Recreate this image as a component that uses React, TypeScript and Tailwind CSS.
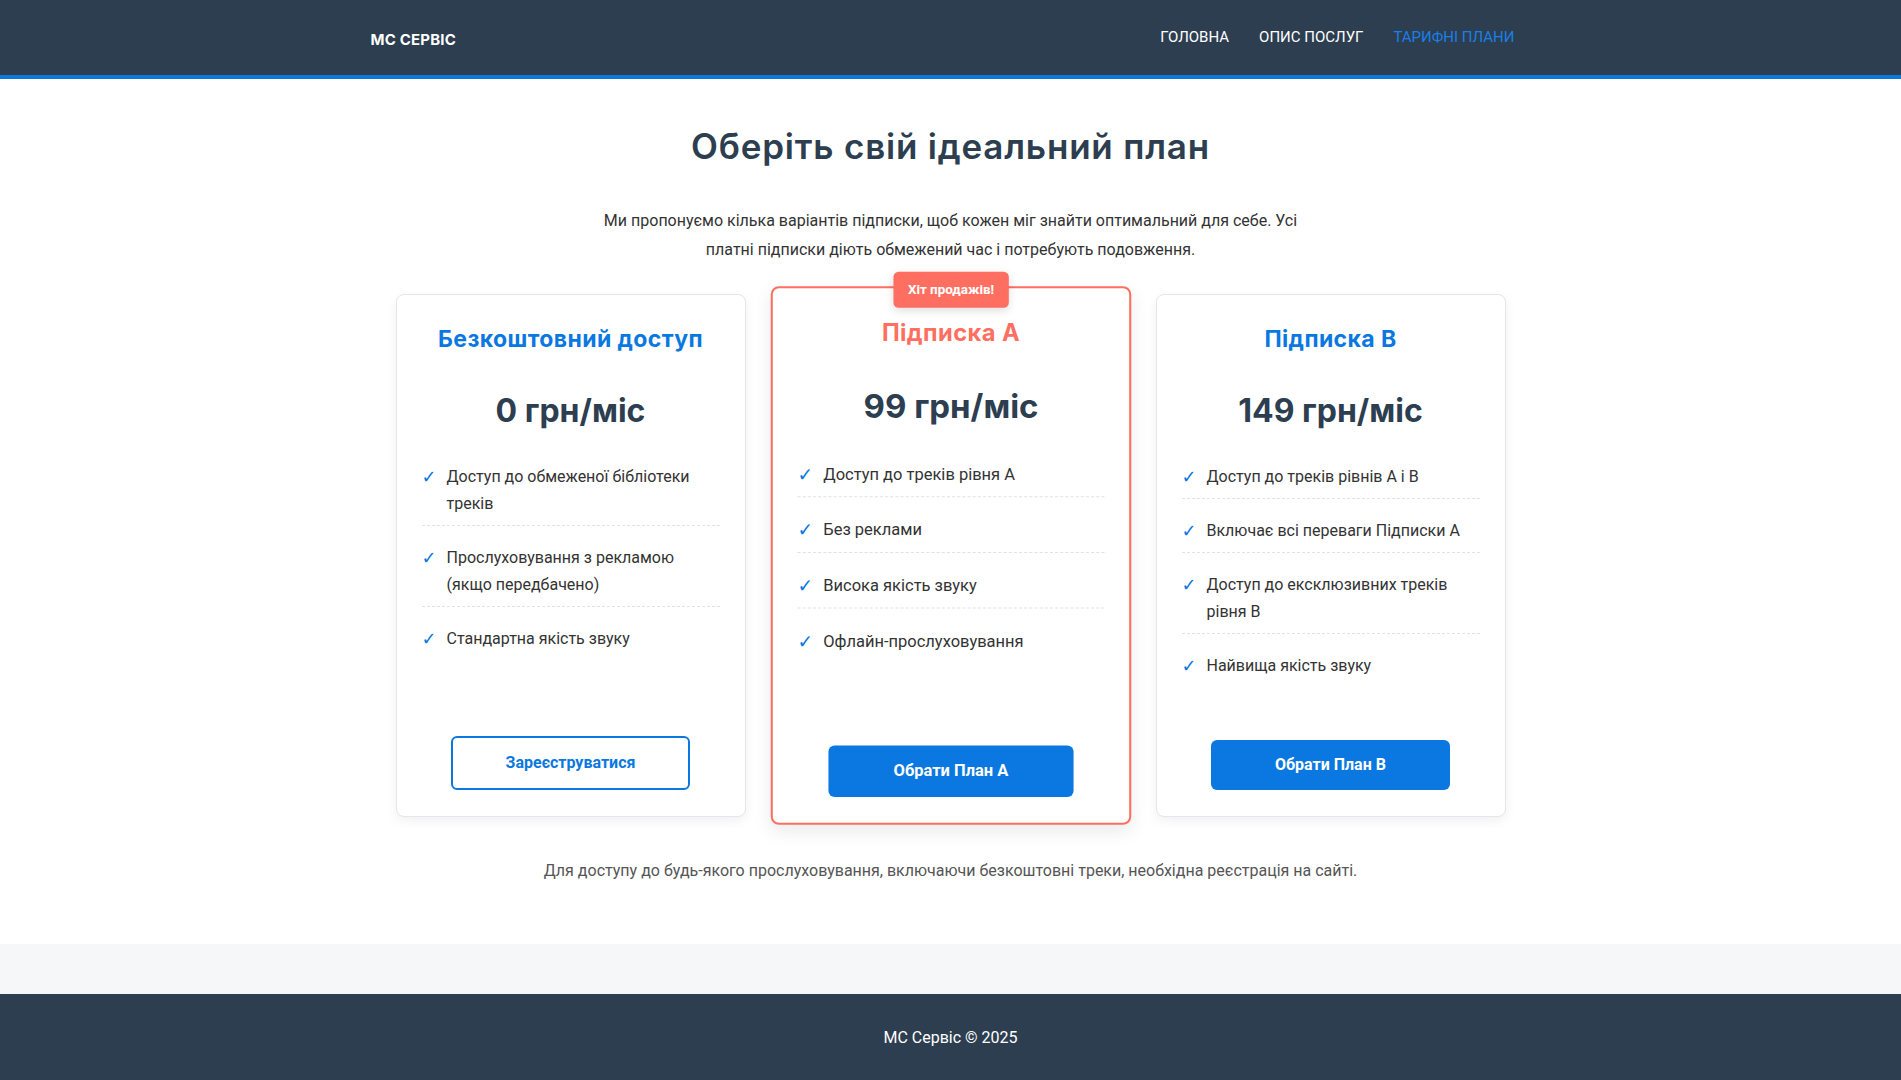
const plans = [
  {
    title: "Безкоштовний доступ",
    price: "0 грн/міс",
    features: ["Доступ до обмеженої бібліотеки треків", "Прослуховування з рекламою (якщо передбачено)", "Стандартна якість звуку"],
    button: "Зареєструватися",
    outline: true,
    featured: false,
  },
  {
    title: "Підписка А",
    price: "99 грн/міс",
    features: ["Доступ до треків рівня А", "Без реклами", "Висока якість звуку", "Офлайн-прослуховування"],
    button: "Обрати План А",
    outline: false,
    featured: true,
  },
  {
    title: "Підписка В",
    price: "149 грн/міс",
    features: ["Доступ до треків рівнів А і В", "Включає всі переваги Підписки А", "Доступ до ексклюзивних треків рівня В", "Найвища якість звуку"],
    button: "Обрати План В",
    outline: false,
    featured: false,
  },
]

function PlanCard({ plan }: { plan: (typeof plans)[number] }) {
  return (
    <div
      className={
        plan.featured
          ? "relative z-10 flex w-[350px] scale-[1.03] flex-col rounded-[8px] border-2 border-[#ff6f61] bg-white px-[24px] pt-[25px] pb-[25px] shadow-[0_6px_18px_rgba(0,0,0,0.08)]"
          : "relative flex w-[350px] flex-col rounded-[8px] border border-[#e3e6ea] bg-white px-[25px] pt-[26px] pb-[26px] shadow-[0_4px_12px_rgba(0,0,0,0.06)]"
      }
    >
      {plan.featured && (
        <div className="absolute -top-[16px] left-1/2 flex h-[35px] -translate-x-1/2 items-center rounded-[5px] bg-[#ff6f61] px-[14px] text-[13px] font-bold text-white shadow-[0_3px_8px_rgba(0,0,0,0.12)]">
          Хіт продажів!
        </div>
      )}
      <h3
        className={`font-['Inter',sans-serif] text-[23px] font-bold leading-[36px] tracking-[0.4px] ${
          plan.featured ? "text-[#ff6f61]" : "text-[#0a78e0]"
        }`}
      >
        {plan.title}
      </h3>
      <div className="mt-[33px] font-['Inter',sans-serif] text-[32px] font-bold leading-[41px] text-[#2c3e50]">
        {plan.price}
      </div>
      <ul className="mt-[24px] mb-[43px] text-left">
        {plan.features.map((f, i) => (
          <li
            key={f}
            className={`mb-[10px] flex py-[8px] pr-[10px] text-[16px] leading-[27px] text-[#333] ${
              i < plan.features.length - 1 ? "border-b border-dashed border-[#e2e2e2]" : ""
            }`}
          >
            <span className="w-[25px] shrink-0 font-['DejaVu_Sans',sans-serif] text-[18px] font-bold leading-[27px] text-[#0a78e0]">
              ✓
            </span>
            <span>{f}</span>
          </li>
        ))}
      </ul>
      <button
        className={
          plan.outline
            ? "mx-auto mt-auto w-[80%] rounded-[6px] border-2 border-[#0a78e0] bg-white py-[14px] text-[16px] font-bold leading-[22px] text-[#0a78e0]"
            : "mx-auto mt-auto w-[80%] rounded-[6px] bg-[#0a78e0] py-[14px] text-[16px] font-bold leading-[22px] text-white"
        }
      >
        {plan.button}
      </button>
    </div>
  )
}

export default function App() {
  return (
    <div className="min-h-screen bg-white font-['Roboto',sans-serif] text-[#333]">
      <header className="border-b-4 border-[#0a78e0] bg-[#2c3e50]">
        <div className="mx-auto flex h-[75px] max-w-[1200px] items-center justify-between px-[20px]">
          <div className="mt-[5px] font-['Inter',sans-serif] text-[15px] font-bold tracking-[0.2px] text-white">МС СЕРВІС</div>
          <nav className="mr-[16px] flex gap-[30px] text-[15px] uppercase">
            <a className="text-white">Головна</a>
            <a className="text-white">Опис послуг</a>
            <a className="text-[#1a7fe6]">Тарифні плани</a>
          </nav>
        </div>
      </header>

      <main className="px-5 pt-[46px] pb-[61px] text-center">
        <h1 className="font-['Inter',sans-serif] text-[35px] font-semibold leading-[42px] tracking-[0.8px] text-[#2c3e50]">
          Оберіть свій ідеальний план
        </h1>
        <p className="mx-auto mt-[39px] max-w-[700px] text-[16px] leading-[29px] text-[#333]">
          Ми пропонуємо кілька варіантів підписки, щоб кожен міг знайти оптимальний для себе. Усі платні підписки діють
          обмежений час і потребують подовження.
        </p>
        <div className="mt-[30px] flex items-stretch justify-center gap-[30px]">
          {plans.map((p) => (
            <PlanCard key={p.title} plan={p} />
          ))}
        </div>
        <p className="mt-[42px] text-[16px] leading-[24px] text-[#555]">
          Для доступу до будь-якого прослуховування, включаючи безкоштовні треки, необхідна реєстрація на сайті.
        </p>
      </main>

      <div className="h-[50px] bg-[#f6f7f9]" />

      <footer className="bg-[#2c3e50] py-[32px] text-center text-[16px] leading-[24px] text-white">МС Сервіс © 2025</footer>
    </div>
  )
}
